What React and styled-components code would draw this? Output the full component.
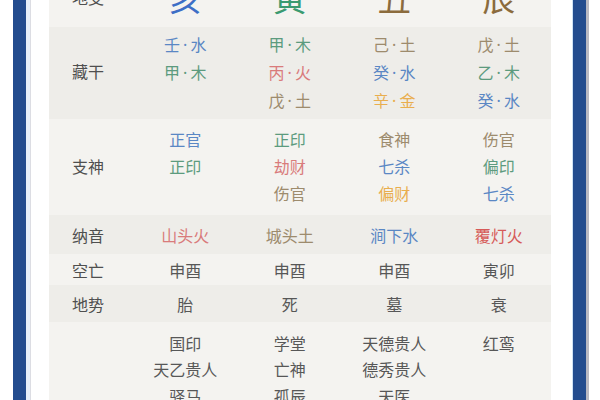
import React from "react";
import styled, { createGlobalStyle } from "styled-components";

const Global = createGlobalStyle`
  html, body { margin: 0; padding: 0; background: #ffffff; overflow: hidden; }
  body { font-family: "Noto Sans CJK SC", "Noto Sans", sans-serif; }
`;

const TONES = {
  label: "#4f4f4f",
  gray: "#575757",
  water: "#5a87c4",
  wood: "#5c9b7e",
  fire: "#d97b7b",
  fireStrong: "#d65a58",
  earth: "#9d8b6d",
  metal: "#e9ae4e",
  topWater: "#3d6ec6",
  topWood: "#3a9a70",
  topEarth: "#8b6b3d",
};

const Frame = styled.div`
  display: flex;
  width: 600px;
  height: 400px;
  background: #ffffff;
  overflow: hidden;
`;

const Margin = styled.div`
  flex: 0 0 ${(p) => p.$w}px;
  background: #ffffff;
`;

const BlueBar = styled.div`
  flex: 0 0 13px;
  background: #234c8e;
`;

const Strip = styled.div`
  flex: 0 0 ${(p) => p.$w}px;
  background: ${(p) => p.$c};
`;

const Table = styled.div`
  flex: 0 0 502px;
  display: flex;
  flex-direction: column;
  margin-top: -33px;
`;

const Row = styled.div`
  display: grid;
  grid-template-columns: 84px repeat(4, 1fr);
  align-items: start;
  height: ${(p) => p.$h}px;
  padding-top: ${(p) => p.$pt}px;
  box-sizing: border-box;
  background: ${(p) => (p.$shade ? "#eeede9" : "#f4f3f0")};
  flex-shrink: 0;
`;

const Label = styled.div`
  padding-left: 23px;
  padding-top: ${(p) => p.$offset}px;
  font-size: 16px;
  line-height: ${(p) => p.$lh}px;
  color: ${TONES.label};
`;

const Cell = styled.div`
  display: flex;
  flex-direction: column;
  align-items: center;
`;

const Line = styled.div`
  font-size: 16px;
  line-height: ${(p) => p.$lh}px;
  color: ${(p) => TONES[p.$tone]};
  white-space: nowrap;
`;

const Dot = styled.span`
  font-family: "Noto Sans", sans-serif;
  margin: 0 3px;
`;

const Big = styled.div`
  font-size: 33px;
  line-height: ${(p) => p.$lh}px;
  color: ${(p) => TONES[p.$tone]};
`;

const rows = [
  {
    label: "地支",
    h: 60,
    pt: 0,
    lh: 60,
    big: true,
    cells: [
      [["亥", "topWater"]],
      [["寅", "topWood"]],
      [["丑", "topEarth"]],
      [["辰", "topEarth"]],
    ],
  },
  {
    label: "藏干",
    h: 92,
    pt: 3.5,
    lh: 27,
    shade: true,
    cells: [
      [["壬·水", "water"], ["甲·木", "wood"]],
      [["甲·木", "wood"], ["丙·火", "fire"], ["戊·土", "earth"]],
      [["己·土", "earth"], ["癸·水", "water"], ["辛·金", "metal"]],
      [["戊·土", "earth"], ["乙·木", "wood"], ["癸·水", "water"]],
    ],
  },
  {
    label: "支神",
    h: 96,
    pt: 7,
    lh: 27,
    cells: [
      [["正官", "water"], ["正印", "wood"]],
      [["正印", "wood"], ["劫财", "fire"], ["伤官", "earth"]],
      [["食神", "earth"], ["七杀", "water"], ["偏财", "metal"]],
      [["伤官", "earth"], ["偏印", "wood"], ["七杀", "water"]],
    ],
  },
  {
    label: "纳音",
    h: 39,
    pt: 7,
    lh: 27,
    shade: true,
    cells: [
      [["山头火", "fire"]],
      [["城头土", "earth"]],
      [["涧下水", "water"]],
      [["覆灯火", "fireStrong"]],
    ],
  },
  {
    label: "空亡",
    h: 31,
    pt: 2.5,
    lh: 27,
    cells: [
      [["申酉", "gray"]],
      [["申酉", "gray"]],
      [["申酉", "gray"]],
      [["寅卯", "gray"]],
    ],
  },
  {
    label: "地势",
    h: 37,
    pt: 5.5,
    lh: 27,
    shade: true,
    cells: [
      [["胎", "gray"]],
      [["死", "gray"]],
      [["墓", "gray"]],
      [["衰", "gray"]],
    ],
  },
  {
    label: "",
    h: 120,
    pt: 7.5,
    lh: 26.5,
    cells: [
      [["国印", "gray"], ["天乙贵人", "gray"], ["驿马", "gray"]],
      [["学堂", "gray"], ["亡神", "gray"], ["孤辰", "gray"]],
      [["天德贵人", "gray"], ["德秀贵人", "gray"], ["天医", "gray"]],
      [["红鸾", "gray"]],
    ],
  },
];

function renderText(t) {
  const parts = t.split("·");
  if (parts.length === 1) return t;
  return (
    <>
      {parts[0]}
      <Dot>·</Dot>
      {parts[1]}
    </>
  );
}

export default function App() {
  return (
    <>
      <Global />
      <Frame>
        <Margin $w={13} />
        <BlueBar />
        <Strip $w={4} $c="#e6eff9" />
        <Strip $w={1} $c="#dcdde3" />
        <Margin $w={18} />
        <Table>
          {rows.map((r, i) => {
            const maxLines = Math.max(...r.cells.map((c) => c.length));
            const offset = r.big ? 0 : ((maxLines - 1) * r.lh) / 2;
            return (
              <Row key={i} $h={r.h} $pt={r.pt} $shade={r.shade}>
                <Label $lh={r.lh} $offset={r.label ? offset : 0}>
                  {r.label}
                </Label>
                {r.cells.map((lines, j) => (
                  <Cell key={j}>
                    {lines.map(([t, tone], k) =>
                      r.big ? (
                        <Big key={k} $lh={r.lh} $tone={tone}>
                          {t}
                        </Big>
                      ) : (
                        <Line key={k} $lh={r.lh} $tone={tone}>
                          {renderText(t)}
                        </Line>
                      )
                    )}
                  </Cell>
                ))}
              </Row>
            );
          })}
        </Table>
        <Margin $w={21} />
        <Strip $w={1} $c="#cfe2f4" />
        <BlueBar />
        <Strip $w={3} $c="#b9b9c2" />
        <Margin $w={10} />
      </Frame>
    </>
  );
}
